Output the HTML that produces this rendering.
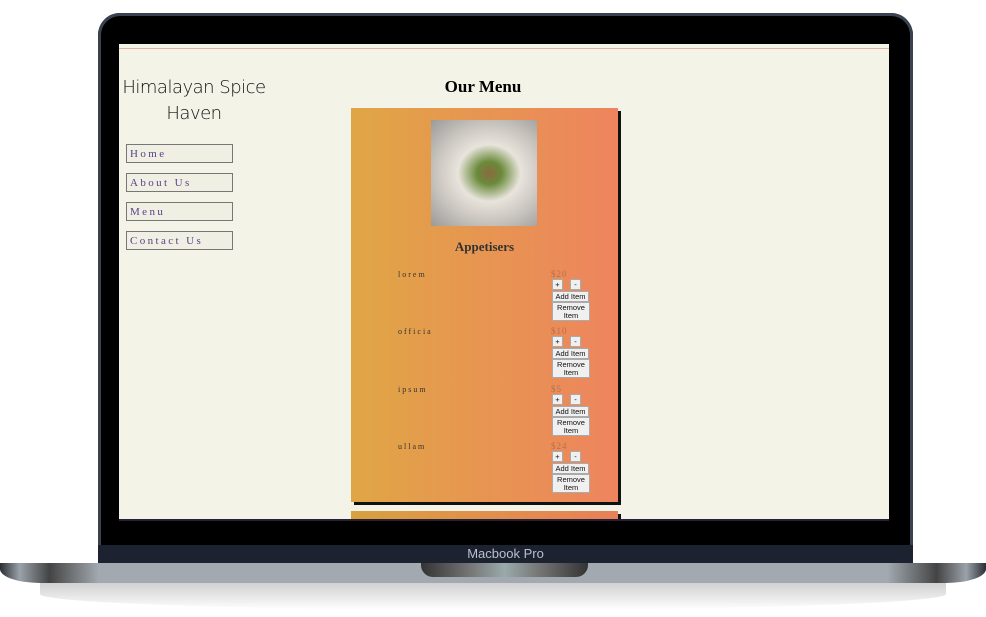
<!DOCTYPE html>
<html><head><style>
body{margin:0;width:986px;height:617px;background:#fff;position:relative;overflow:hidden;font-family:"Liberation Serif",serif}
.frame{position:absolute;left:98px;top:13px;width:815px;height:550px;background:#000;border-radius:22px 22px 0 0;box-shadow:inset 0 0 0 3px #3a4252}
.bar{position:absolute;left:98px;top:545px;width:815px;height:19px;background:#1c2230;color:#b9c0cc;font:13px "Liberation Sans",sans-serif;text-align:center;line-height:17px}
.shadow{position:absolute;left:40px;top:578px;width:906px;height:32px;background:linear-gradient(#c8c8c8,#fff);border-radius:0 0 50% 50%}
.base{position:absolute;left:0;top:563px;width:986px;height:20px;background:linear-gradient(90deg,#2a2e33 0,#9aa2aa 2%,#444 5%,#a2a9b0 10%,#a2a9b0 90%,#444 95%,#9aa2aa 98%,#2a2e33 100%);border-radius:0 0 40px 40px/0 0 14px 14px}
.notch{position:absolute;left:421px;top:563px;width:167px;height:14px;border-radius:0 0 12px 12px;background:linear-gradient(90deg,#333,#777 30%,#9aa 50%,#777 70%,#333)}
.screen{position:absolute;left:119px;top:44px;width:770px;height:477px;background:#f3f3e7;overflow:hidden;border-bottom:2px solid #2a2035;box-sizing:border-box}
.line{position:absolute;left:0;top:4px;width:100%;height:1px;background:#e0b5a0}
.title{position:absolute;left:0;width:150px;top:31px;text-align:center;font:18px "DejaVu Sans",sans-serif;font-weight:200;color:#111;line-height:26px;letter-spacing:-0.5px}
.nav{position:absolute;left:7px;width:107px;height:19px;border:1px solid #777;background:#efefe3;color:#5a3f8a;font-size:11px;letter-spacing:2.4px;line-height:18px;padding-left:3px;box-sizing:border-box}
h1{position:absolute;left:232px;width:264px;top:33px;margin:0;text-align:center;font-size:17px;font-weight:bold}
.card{position:absolute;left:232px;top:64px;width:267px;height:394px;background:linear-gradient(90deg,#e0a645,#ee845e);box-shadow:3px 3px 0 #111}
.card2{position:absolute;left:232px;top:467px;width:267px;height:20px;background:linear-gradient(90deg,#d8a040,#e88058);box-shadow:3px 3px 0 #111}
.img{position:absolute;left:80px;top:12px;width:106px;height:106px;background:radial-gradient(ellipse at 55% 50%,#8a6a40 0,#6a8a3a 15%,#e8e4dc 38%,#cfcac4 60%,#9a9a98 100%)}
h2{position:absolute;left:0;width:267px;top:131px;margin:0;text-align:center;font-size:13px;font-weight:bold;color:#333}
.item{position:absolute;left:47px;font-size:8px;letter-spacing:2px;color:#333}
.price{position:absolute;left:200px;font-size:9px;color:#b5704a;letter-spacing:1px}
.b{position:absolute;background:#f0f0f0;border:1px solid #aaa;font:7.5px "Liberation Sans",sans-serif;text-align:center;color:#111;box-sizing:border-box}
</style></head><body>
<div class="shadow"></div>
<div class="frame"></div>
<div class="screen">
<div class="line"></div>
<div class="title">Himalayan Spice<br>Haven</div>
<div class="nav" style="top:100px">Home</div>
<div class="nav" style="top:129px">About Us</div>
<div class="nav" style="top:158px">Menu</div>
<div class="nav" style="top:187px">Contact Us</div>
<h1>Our Menu</h1>
<div class="card">
<div class="img"></div>
<h2>Appetisers</h2>
<div class="item" style="top:162px">lorem</div><div class="price" style="top:161px">$20</div>
<div class="item" style="top:219px">officia</div><div class="price" style="top:218px">$10</div>
<div class="item" style="top:277px">ipsum</div><div class="price" style="top:276px">$5</div>
<div class="item" style="top:334px">ullam</div><div class="price" style="top:333px">$24</div>
</div>
<div class="card2"></div>
</div>
<div id="btns"></div>
<script>
var h='';[279,336,394,451].forEach(function(y){
h+='<div class="b" style="left:552px;top:'+y+'px;width:11px;height:11px;line-height:9px">+</div>';
h+='<div class="b" style="left:570px;top:'+y+'px;width:11px;height:11px;line-height:9px">-</div>';
h+='<div class="b" style="left:552px;top:'+(y+12)+'px;width:37px;height:11px;line-height:9px">Add Item</div>';
h+='<div class="b" style="left:552px;top:'+(y+23)+'px;width:38px;height:19px;line-height:8px;padding-top:1px">Remove Item</div>';});
document.getElementById('btns').innerHTML=h;
</script>
<div class="bar">Macbook Pro</div>
<div class="base"></div>
<div class="notch"></div>
</body></html>
